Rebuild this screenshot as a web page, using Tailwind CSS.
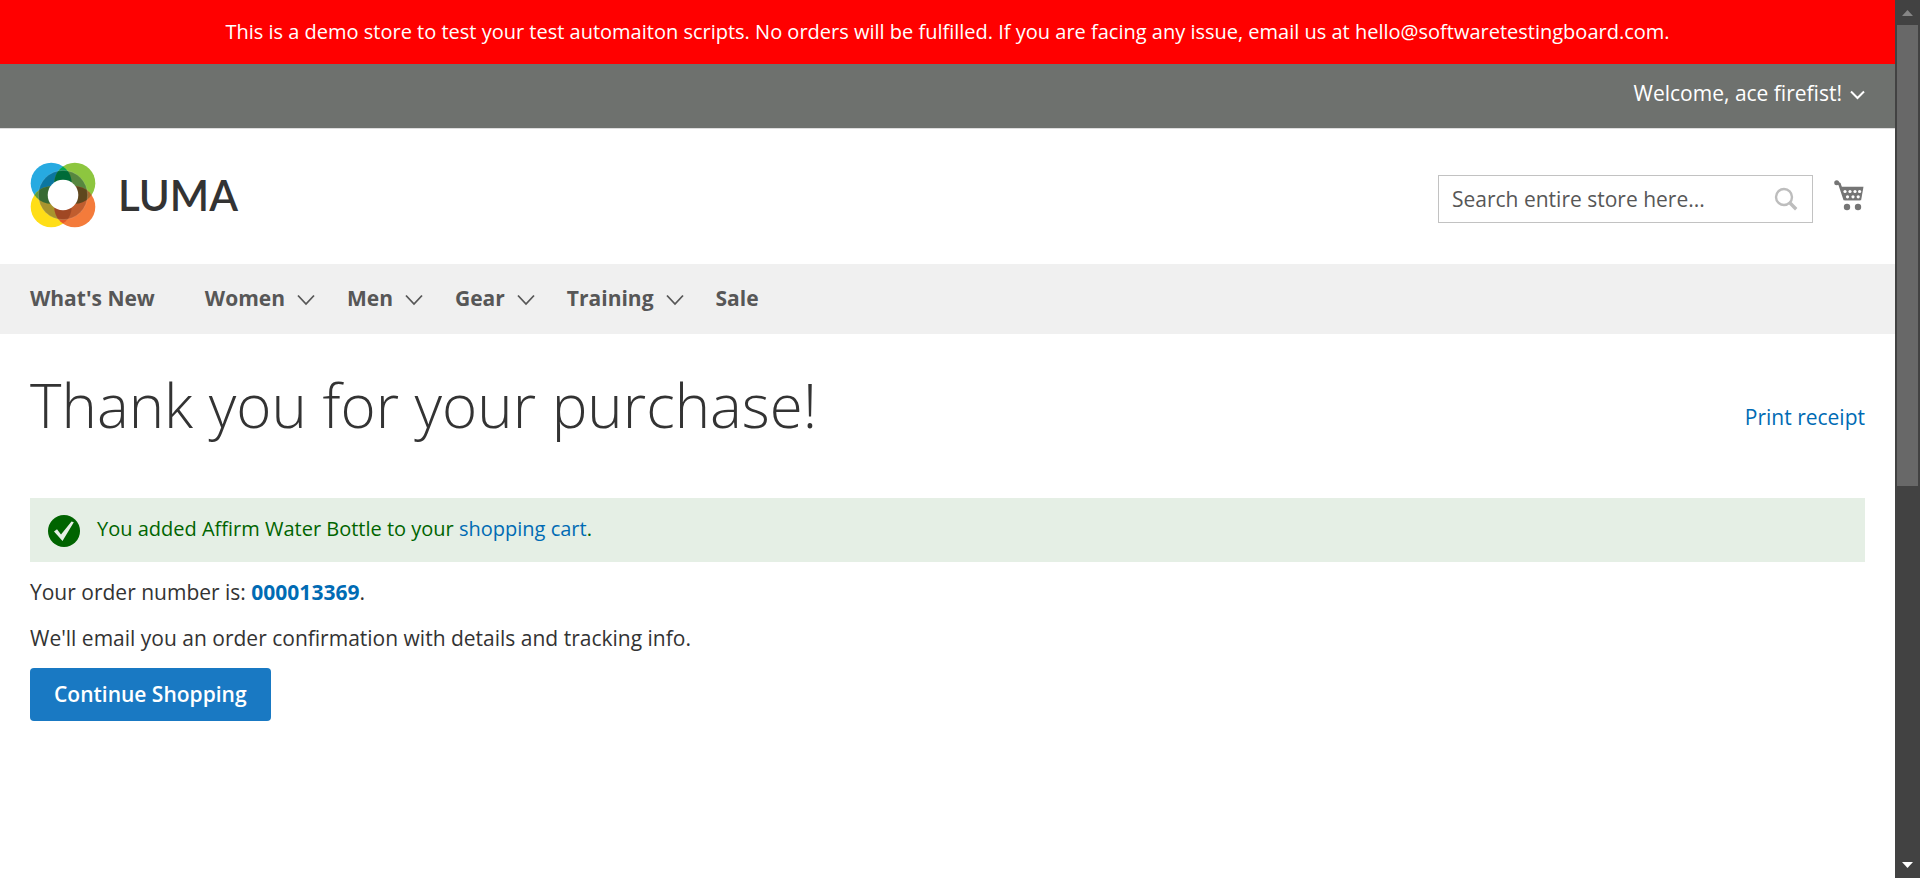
<!DOCTYPE html>
<html lang="en">
<head>
<meta charset="utf-8">
<meta name="viewport" content="width=device-width, initial-scale=1">
<title>Success Page</title>
<script src="https://cdn.jsdelivr.net/npm/@tailwindcss/browser@4"></script>
</head>
<body class="flex h-screen overflow-hidden bg-white font-['Open_Sans',sans-serif] text-[21px] leading-[30px] text-[#333333]">
<div class="min-w-0 flex-1">
  <div class="bg-[#ff0000] px-6 py-[18px] text-center text-[20px] leading-[28px] text-white">This is a demo store to test your test automaiton scripts. No orders will be fulfilled. If you are facing any issue, email us at hello@softwaretestingboard.com.</div>

  <header>
    <div class="flex h-16 justify-end bg-[#6e716e] px-[30px] pt-[14px]">
      <button type="button" class="flex h-[30px] items-center gap-2 text-white">Welcome, ace firefist!
        <svg class="mt-1 h-[10px] w-[15px]" viewBox="0 0 15 10" fill="none" stroke="currentColor" stroke-width="2" aria-hidden="true"><path d="M1 1.5 7.5 8 14 1.5"/></svg>
      </button>
    </div>

    <div class="flex h-[136px] items-center justify-between border-t border-[#dddddd] px-[30px]">
      <a href="#" aria-label="Luma home" class="flex items-center gap-[22px] pb-1">
        <svg class="h-[66px] w-[66px]" viewBox="-33 -33 66 66" aria-hidden="true">
          <defs>
            <clipPath id="tl"><circle cx="-11.8" cy="-11.8" r="20.5"/></clipPath>
            <clipPath id="tr"><circle cx="11.8" cy="-11.8" r="20.5"/></clipPath>
            <clipPath id="bl"><circle cx="-11.8" cy="11.8" r="20.5"/></clipPath>
            <clipPath id="br"><circle cx="11.8" cy="11.8" r="20.5"/></clipPath>
            <clipPath id="ring"><circle r="24.6"/></clipPath>
          </defs>
          <circle cx="-11.8" cy="-11.8" r="20.5" fill="#27aae1"/>
          <circle cx="11.8" cy="-11.8" r="20.5" fill="#8dc63f"/>
          <circle cx="-11.8" cy="11.8" r="20.5" fill="#ffde17"/>
          <circle cx="11.8" cy="11.8" r="20.5" fill="#f47b3b"/>
          <circle cx="-11.8" cy="-11.8" r="20.5" fill="#00a651" clip-path="url(#tr)"/>
          <circle cx="-11.8" cy="-11.8" r="20.5" fill="#5b9b3c" clip-path="url(#bl)"/>
          <circle cx="11.8" cy="-11.8" r="20.5" fill="#a86b2e" clip-path="url(#br)"/>
          <circle cx="-11.8" cy="11.8" r="20.5" fill="#e35a28" clip-path="url(#br)"/>
          <g clip-path="url(#ring)">
            <circle cx="-11.8" cy="-11.8" r="20.5" fill="#0b76a0"/>
            <circle cx="11.8" cy="-11.8" r="20.5" fill="#57873f"/>
            <circle cx="-11.8" cy="11.8" r="20.5" fill="#a8942e"/>
            <circle cx="11.8" cy="11.8" r="20.5" fill="#c05d2e"/>
            <circle cx="-11.8" cy="-11.8" r="20.5" fill="#006b38" clip-path="url(#tr)"/>
            <circle cx="-11.8" cy="-11.8" r="20.5" fill="#386a33" clip-path="url(#bl)"/>
            <circle cx="11.8" cy="-11.8" r="20.5" fill="#5f471e" clip-path="url(#br)"/>
            <circle cx="-11.8" cy="11.8" r="20.5" fill="#a04824" clip-path="url(#br)"/>
          </g>
          <circle r="24.6" fill="none" stroke="#ffffff" stroke-opacity=".25" stroke-width=".6"/>
          <circle r="15.3" fill="#ffffff"/>
        </svg>
        <span class="font-['Lato',sans-serif] text-[42px] leading-[48px] font-semibold text-[#333333]">LUMA</span>
      </a>
      <div class="flex items-center gap-5 pt-1">
        <form role="search" class="flex h-12 w-[375px] items-center border border-[#c2c2c2] bg-white pr-[14px] pl-[13px]" onsubmit="return false">
          <input type="search" aria-label="Search" placeholder="Search entire store here..." class="min-w-0 flex-1 bg-transparent leading-[30px] outline-none placeholder:text-[#575757]">
          <button type="submit" aria-label="Search" class="text-[#bdbdbd]">
            <svg class="h-6 w-6" viewBox="0 0 24 24" fill="none" stroke="currentColor" aria-hidden="true"><circle cx="10" cy="10" r="8" stroke-width="2.4"/><path d="m15.8 15.8 6.4 6.4" stroke-width="3.4"/></svg>
          </button>
        </form>
        <a href="#" aria-label="My cart" class="pb-2 text-[#757575]">
          <svg class="h-8 w-8" viewBox="0 0 32 32" aria-hidden="true">
            <path d="M3 3.2 6.5 5l5 15H27" fill="none" stroke="currentColor" stroke-width="2.6"/>
            <circle cx="3.7" cy="3.7" r="2.5" fill="currentColor"/>
            <path d="M7 7.8h23.5l-2.4 13.5H11.6z" fill="currentColor"/>
            <g fill="#ffffff"><circle cx="12" cy="12.5" r="1.6"/><circle cx="17" cy="12.5" r="1.6"/><circle cx="22" cy="12.5" r="1.6"/><circle cx="26.6" cy="12.5" r="1.6"/><circle cx="14.5" cy="17.8" r="1.6"/><circle cx="20" cy="17.8" r="1.6"/><circle cx="25.2" cy="17.8" r="1.6"/></g>
            <circle cx="14" cy="28" r="3.2" fill="currentColor"/><circle cx="25" cy="28" r="3.2" fill="currentColor"/>
          </svg>
        </a>
      </div>
    </div>
  </header>

  <nav class="flex h-[70px] items-center gap-8 bg-[#f0f0f0] px-[30px] pb-0.5 font-bold text-[#575757]">
    <a href="#" class="mr-[18px]">What's New</a>
    <a href="#" class="flex items-center gap-3">Women <svg class="mt-1 h-3 w-[18px]" viewBox="0 0 18 12" fill="none" stroke="currentColor" stroke-width="1.8" aria-hidden="true"><path d="m1 1.5 8 8.5 8-8.5"/></svg></a>
    <a href="#" class="flex items-center gap-3">Men <svg class="mt-1 h-3 w-[18px]" viewBox="0 0 18 12" fill="none" stroke="currentColor" stroke-width="1.8" aria-hidden="true"><path d="m1 1.5 8 8.5 8-8.5"/></svg></a>
    <a href="#" class="flex items-center gap-3">Gear <svg class="mt-1 h-3 w-[18px]" viewBox="0 0 18 12" fill="none" stroke="currentColor" stroke-width="1.8" aria-hidden="true"><path d="m1 1.5 8 8.5 8-8.5"/></svg></a>
    <a href="#" class="flex items-center gap-3">Training <svg class="mt-1 h-3 w-[18px]" viewBox="0 0 18 12" fill="none" stroke="currentColor" stroke-width="1.8" aria-hidden="true"><path d="m1 1.5 8 8.5 8-8.5"/></svg></a>
    <a href="#">Sale</a>
  </nav>

  <main class="px-[30px] pt-[38px]">
    <div class="flex items-end justify-between">
      <h1 class="text-[60px] leading-[66px] font-light">Thank you for your purchase!</h1>
      <a href="#" class="pb-1.5 text-[#006bb4]">Print receipt</a>
    </div>
    <div role="status" class="mt-[60px] flex h-16 items-center gap-4 bg-[#e5efe5] px-[17px] text-[20px] leading-[28px] text-[#006400]">
      <svg class="mt-0.5 h-[34px] w-[34px]" viewBox="0 0 34 34" aria-hidden="true"><circle cx="17" cy="17" r="16" fill="#006400"/><path d="m7 17.5 3-2.3 4 5.3L24.5 7.5l2.3.8L15.5 27z" fill="#e5efe5"/></svg>
      <p class="pb-0.5">You added Affirm Water Bottle to your <a href="#" class="text-[#006bb4]">shopping cart</a>.</p>
    </div>
    <p class="mt-[15px]">Your order number is: <a href="#" class="font-bold text-[#006bb4]">000013369</a>.</p>
    <p class="mt-4">We'll email you an order confirmation with details and tracking info.</p>
    <a href="#" class="mt-[15px] inline-block rounded-[4px] bg-[#1979c3] px-6 py-3 leading-[29px] font-semibold text-white">Continue Shopping</a>
  </main>
</div>

<!-- Scrollbar -->
<div class="flex w-[25px] shrink-0 flex-col items-center bg-[#424242]" aria-hidden="true">
  <svg class="h-[25px] w-[25px] shrink-0" viewBox="0 0 25 25"><path d="M7 16 12.5 10 18 16z" fill="#868686"/></svg>
  <div class="w-[21px] flex-[461] bg-[#686868]"></div>
  <div class="flex-[367]"></div>
  <svg class="h-[25px] w-[25px] shrink-0" viewBox="0 0 25 25"><path d="M7 9 12.5 15 18 9z" fill="#ffffff"/></svg>
</div>
</body>
</html>
